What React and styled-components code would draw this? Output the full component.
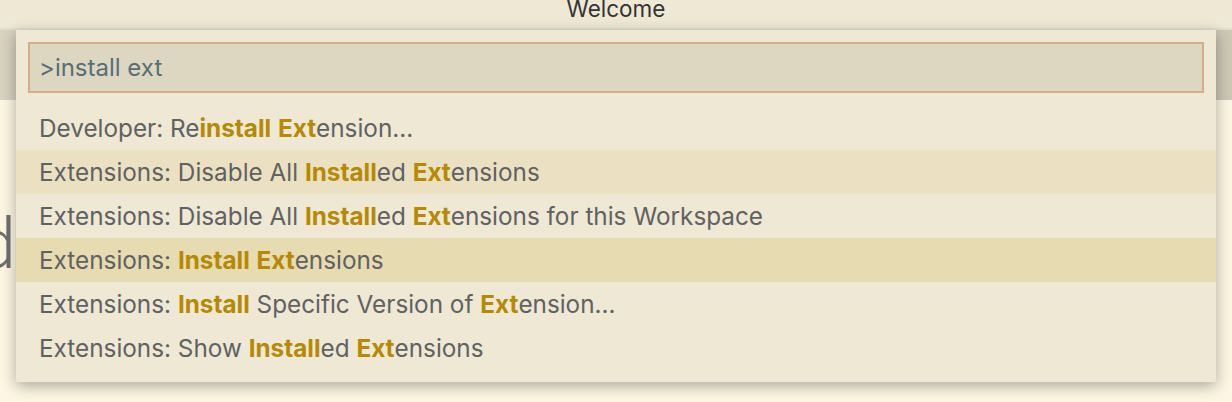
import React from 'react'
import styled, { createGlobalStyle } from 'styled-components'

const GlobalStyle = createGlobalStyle`
  html, body { margin:0; padding:0; background:#fdf6e3; overflow:hidden; }
  body { font-family: Inter, "Liberation Sans", sans-serif; }
`

const Window = styled.div`
  width:1232px; height:402px; position:relative; overflow:hidden; background:#fdf6e3;
`
const TitleBar = styled.div`
  height:30px; background:#eee8d5; display:flex; justify-content:center; align-items:flex-start;
  box-shadow: inset 0 -3px 3px -2px rgba(0,0,0,0.08);
  color:#333; font-size:22.5px; line-height:18px;
`
const TabStrip = styled.div`
  height:70px; background:linear-gradient(90deg, #d8d2c1, #cdc7b6);
`
const Editor = styled.div`
  display:flex; padding-top:104px;
`
const HeadingClip = styled.div`
  width:16px; display:flex; justify-content:flex-end; white-space:nowrap;
`
const Heading = styled.h1`
  margin:0; font-family: Roboto, sans-serif; font-weight:300; font-size:70px; line-height:80px;
  color:#6f6f6f; letter-spacing:0;
`

const QuickInput = styled.div`
  position:absolute; left:16px; top:30px; width:1200px; height:352px;
  background:#eee8d5; box-shadow: 0 4px 14px rgba(0,0,0,0.32);
  display:flex; flex-direction:column;
`
const InputBox = styled.div`
  margin:12px 12px 13px; height:47px; border:2px solid #d3ae86; background:#ddd6c1;
  display:flex; align-items:center; padding:0 9px;
  color:#586e75; font-size:24px;
`
const List = styled.div`
  display:flex; flex-direction:column;
`
const Row = styled.div`
  height:44px; display:flex; align-items:center; padding-left:23px;
  font-size:24.3px; color:#616161; white-space:pre;
  background:${p => p.$focus ? '#e7dbb2' : p.$hover ? '#ebe1c2' : 'transparent'};
`
const Hl = styled.span`
  color:#b58900; font-weight:700;
`

const rows = [
  { parts: ['Developer: Re', ['install'], ' ', ['Ext'], 'ension...'] },
  { parts: ['Extensions: Disable All ', ['Install'], 'ed ', ['Ext'], 'ensions'], hover: true },
  { parts: ['Extensions: Disable All ', ['Install'], 'ed ', ['Ext'], 'ensions for this Workspace'] },
  { parts: ['Extensions: ', ['Install'], ' ', ['Ext'], 'ensions'], focus: true },
  { parts: ['Extensions: ', ['Install'], ' Specific Version of ', ['Ext'], 'ension...'] },
  { parts: ['Extensions: Show ', ['Install'], 'ed ', ['Ext'], 'ensions'] },
]

export default function App() {
  return (
    <Window>
      <GlobalStyle />
      <TitleBar>Welcome</TitleBar>
      <TabStrip />
      <Editor>
        <HeadingClip><Heading>Editing evolved</Heading></HeadingClip>
      </Editor>
      <QuickInput>
        <InputBox>&gt;install ext</InputBox>
        <List>
          {rows.map((r, i) => (
            <Row key={i} $hover={r.hover} $focus={r.focus}>
              {r.parts.map((p, j) => Array.isArray(p) ? <Hl key={j}>{p[0]}</Hl> : <span key={j}>{p}</span>)}
            </Row>
          ))}
        </List>
      </QuickInput>
    </Window>
  )
}
